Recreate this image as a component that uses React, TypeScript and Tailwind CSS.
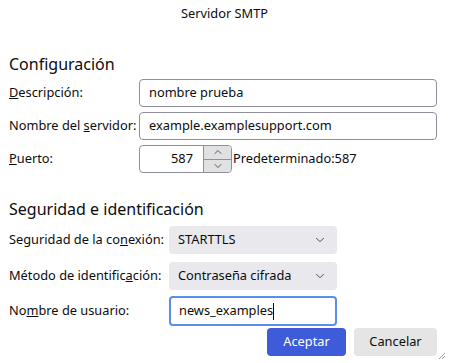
import { ChevronDown, ChevronUp } from "lucide-react";

const font = { fontFamily: '"Noto Sans", "Open Sans", sans-serif' };

function Label({ children, w }: { children: React.ReactNode; w: string }) {
  return <div className={`${w} shrink-0 text-[12.8px] text-[#0c0c0d]`}>{children}</div>;
}

function Select({ value }: { value: string }) {
  return (
    <div className="w-[168px] h-[28px] flex items-center justify-between rounded-[4px] bg-[#e9e9ed] pl-[9px] pr-[10px] text-[12.8px] text-[#0c0c0d]">
      <span>{value}</span>
      <ChevronDown className="w-[14px] h-[14px] text-[#3a3a3a]" strokeWidth={1.5} />
    </div>
  );
}

export default function App() {
  return (
    <div className="w-[449px] h-[363px] bg-white relative overflow-hidden" style={font}>
      <div className="h-[28px] flex items-center justify-center text-[12.8px] text-[#0c0c0d]">Servidor SMTP</div>

      <div className="pl-[9px] pr-[12px]">
        <h2 className="mt-[25px] h-[22px] text-[16px] leading-[22px] text-[#0c0c0d]">Configuración</h2>

        <div className="mt-[4px] flex flex-col gap-[5px]">
          <div className="flex items-center">
            <Label w="w-[130px]"><u>D</u>escripción:</Label>
            <div className="flex-1 h-[28px] rounded-[4px] border border-[#8f8f9d] px-[9px] flex items-center text-[12.8px] text-[#0c0c0d]">nombre prueba</div>
          </div>
          <div className="flex items-center">
            <Label w="w-[130px]">Nombre del <u>s</u>ervidor:</Label>
            <div className="flex-1 h-[28px] rounded-[4px] border border-[#8f8f9d] px-[9px] flex items-center text-[12.8px] text-[#0c0c0d]">example.examplesupport.com</div>
          </div>
          <div className="flex items-center">
            <Label w="w-[130px]"><u>P</u>uerto:</Label>
            <div className="w-[93px] h-[28px] rounded-[4px] border border-[#8f8f9d] flex items-center text-[12.8px] text-[#0c0c0d]">
              <span className="flex-1 text-right pr-[10px]">587</span>
              <div className="w-[28px] h-full flex flex-col border-l border-[#8f8f9d] bg-[#e1e1e4] rounded-r-[4px] overflow-hidden">
                <div className="flex-1 flex items-center justify-center border-b border-[#8f8f9d]">
                  <ChevronUp className="w-[14px] h-[12px] text-[#2a2a2a]" strokeWidth={1.5} />
                </div>
                <div className="flex-1 flex items-center justify-center">
                  <ChevronDown className="w-[14px] h-[12px] text-[#2a2a2a]" strokeWidth={1.5} />
                </div>
              </div>
            </div>
            <span className="ml-[1px] text-[12.8px] text-[#0c0c0d]">Predeterminado:587</span>
          </div>
        </div>

        <h2 className="mt-[25px] h-[22px] text-[16px] leading-[22px] text-[#0c0c0d]">Seguridad e identificación</h2>

        <div className="mt-[6px] flex flex-col gap-[8px]">
          <div className="flex items-center">
            <Label w="w-[160px]">Seguridad de la co<u>n</u>exión:</Label>
            <Select value="STARTTLS" />
          </div>
          <div className="flex items-center">
            <Label w="w-[160px]">Método de identific<u>a</u>ción:</Label>
            <Select value="Contraseña cifrada" />
          </div>
          <div className="flex items-center -mt-[2px]">
            <Label w="w-[160px]">No<u>m</u>bre de usuario:</Label>
            <div className="w-[168px] h-[30px] rounded-[4px] border-2 border-[#5b8def] px-[8px] flex items-center text-[12.8px] text-[#0c0c0d]">
              news_examples<span className="inline-block w-px h-[17px] bg-[#0c0c0d]" />
            </div>
          </div>
        </div>

        <div className="mt-[2px] flex justify-end gap-[8px]">
          <button className="w-[79px] h-[28px] rounded-[4px] bg-[#3e5bd9] text-white text-[12.8px]">Aceptar</button>
          <button className="w-[83px] h-[28px] rounded-[4px] bg-[#e5e5e5] text-[#0c0c0d] text-[12.8px]">Cancelar</button>
        </div>
      </div>

      <svg className="absolute right-[3px] bottom-[3px]" width="8" height="8" viewBox="0 0 8 8">
        <path d="M7 1 L1 7 M7 4 L4 7" stroke="#9a9a9a" strokeWidth="1" />
      </svg>
    </div>
  );
}
